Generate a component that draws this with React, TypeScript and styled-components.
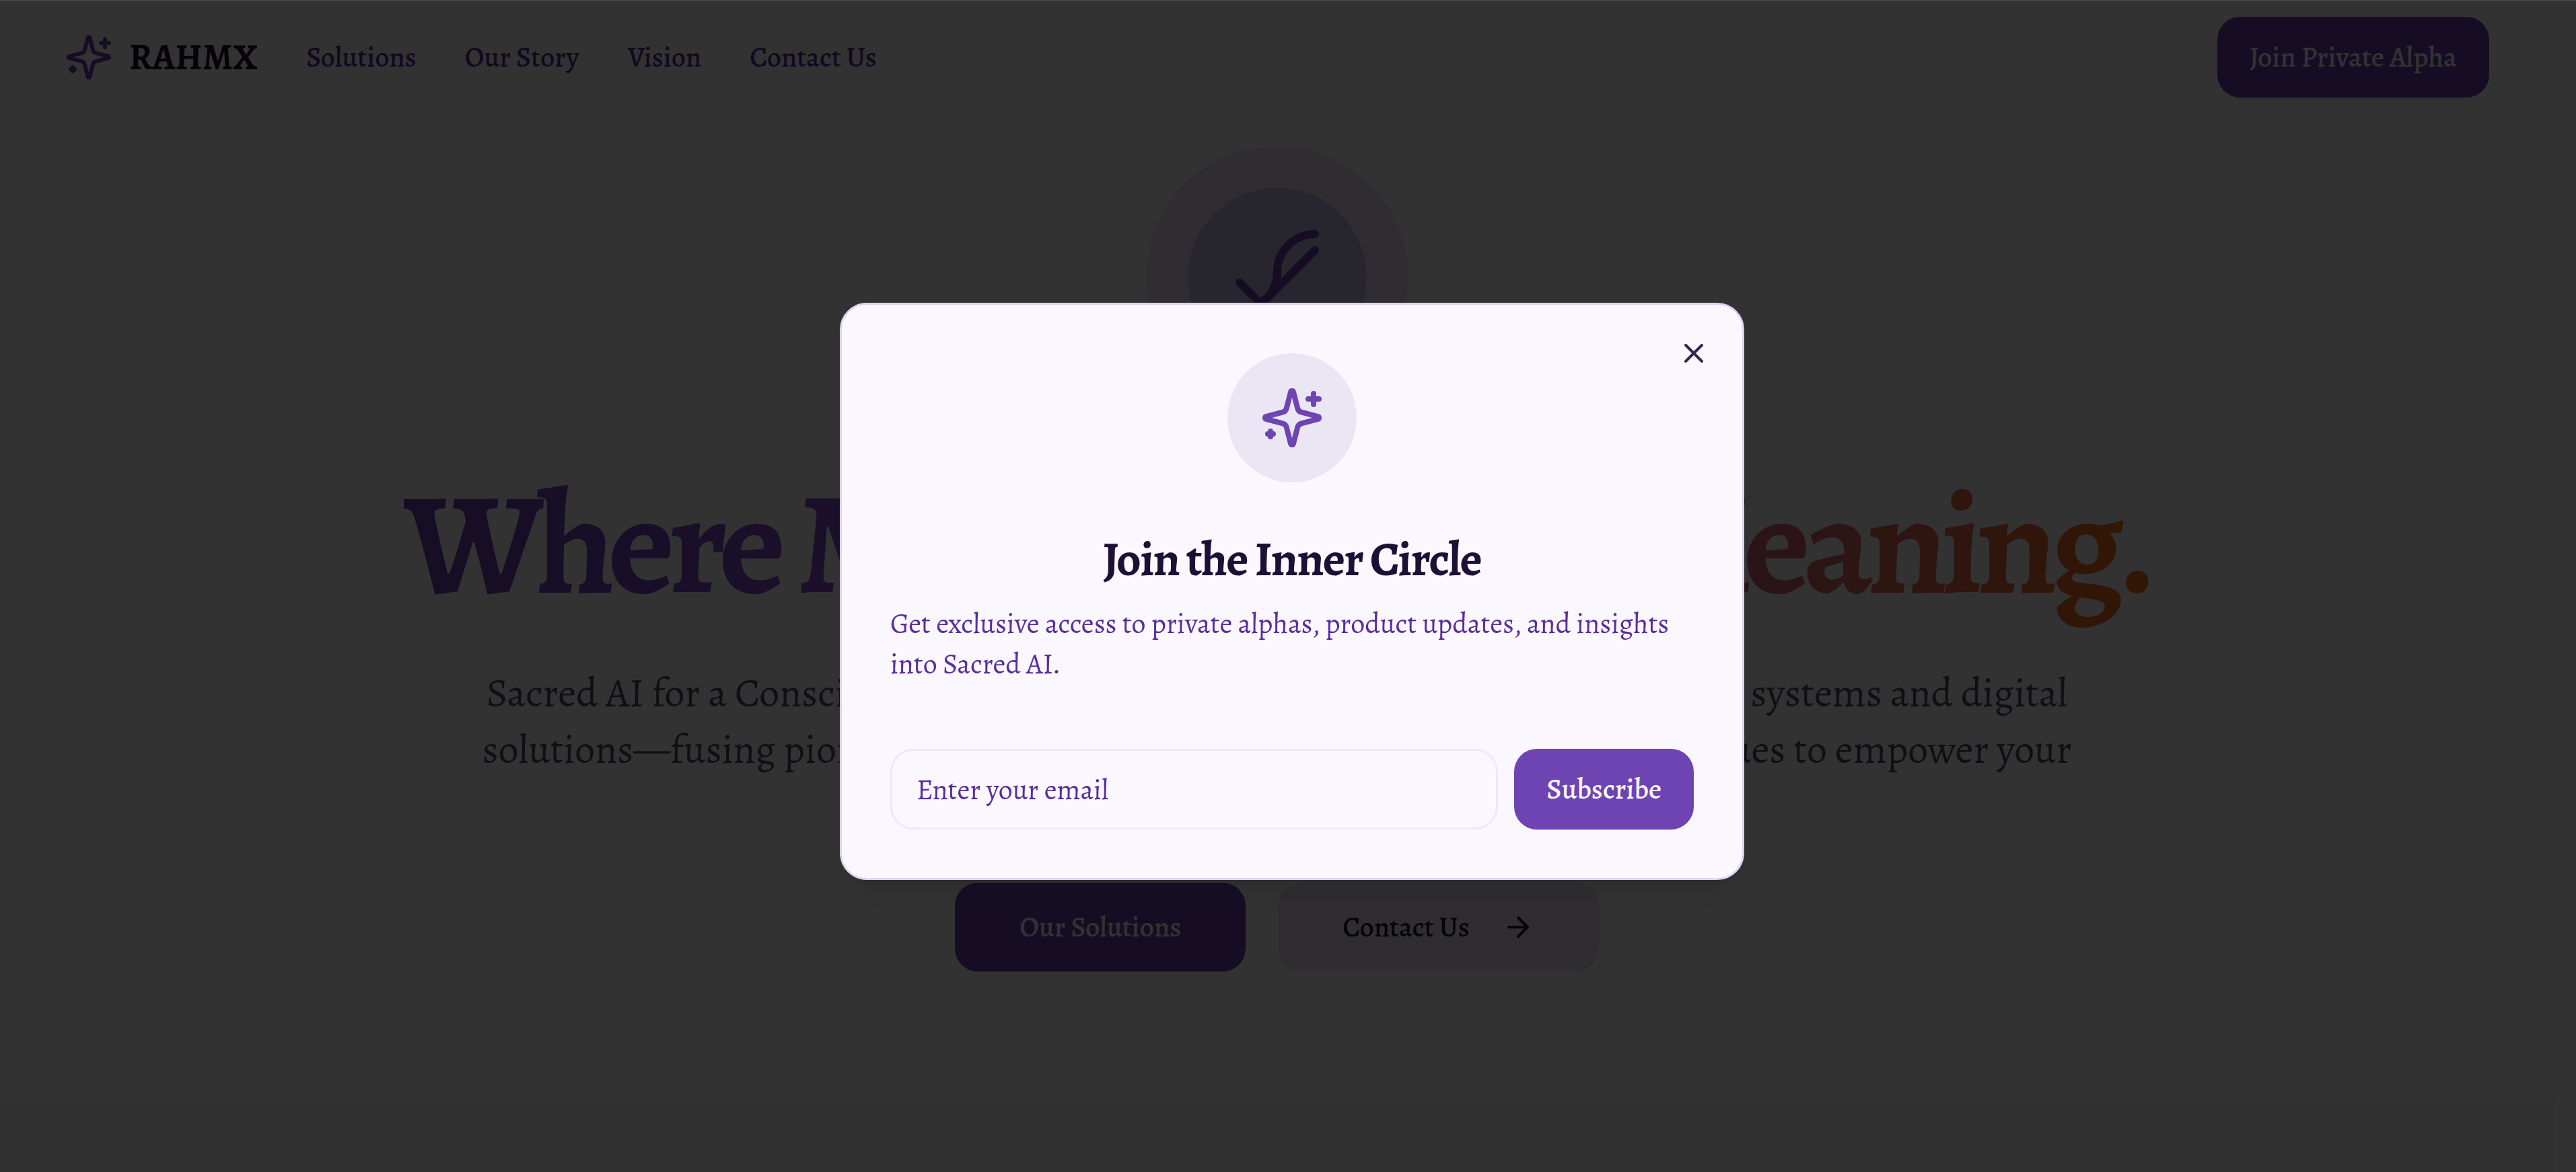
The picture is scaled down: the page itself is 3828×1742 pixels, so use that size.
import React from "react";
import styled, { createGlobalStyle } from "styled-components";
import { ArrowRight, X } from "lucide-react";

const color = {
  canvas: "#fbf9fc",
  surface: "#faf8fe",
  primary: "#6e44b2",
  ink: "#1e1035",
  link: "#5a2d9c",
  body: "#524a66",
  line: "#eae8ec",
  band: "#f3f1f3",
  tint: "rgba(110, 68, 178, 0.13)",
  tintStrong: "rgba(70, 50, 165, 0.24)",
};

const radius = { control: "34px", panel: "40px" };

const GlobalStyle = createGlobalStyle`
  *, *::before, *::after { box-sizing: border-box; }
  html { background: ${color.canvas}; }
  body {
    margin: 0;
    overflow: hidden;
    background: ${color.canvas};
    color: ${color.ink};
    font-family: Alegreya, "Liberation Serif", serif;
    font-size: 42px;
    line-height: 60px;
  }
  button, input { font: inherit; }
`;

const Page = styled.div`
  min-height: 100vh;
  padding: 1px 33px 0 0;
  display: flex;
  flex-direction: column;
`;

const Header = styled.header`
  display: flex;
  align-items: center;
  justify-content: space-between;
  padding: 24px 96px;
  border-bottom: 3px solid ${color.line};
`;

const HeaderStart = styled.div`
  display: flex;
  align-items: center;
  gap: 72px;
`;

const Brand = styled.a`
  display: flex;
  align-items: center;
  gap: 24px;
  color: ${color.ink};
  font-size: 54px;
  font-weight: 700;
  text-decoration: none;

  svg { color: ${color.primary}; }
`;

const Nav = styled.nav`
  display: flex;
  gap: 72px;
`;

const NavLink = styled.a`
  color: ${color.link};
  font-weight: 500;
  text-decoration: none;
`;

const Button = styled.button<{ $large?: boolean; $soft?: boolean }>`
  display: inline-flex;
  align-items: center;
  justify-content: center;
  gap: 48px;
  height: ${(p) => (p.$large ? 132 : 120)}px;
  padding: 0 ${(p) => (p.$large ? 96 : 48)}px;
  border: 0;
  border-radius: ${radius.control};
  background: ${(p) => (p.$soft ? color.tint : color.primary)};
  color: ${(p) => (p.$soft ? color.ink : color.surface)};
  font-weight: 500;
  white-space: nowrap;
  cursor: pointer;
`;

const Hero = styled.section`
  display: flex;
  flex-direction: column;
  align-items: center;
  padding: 45px 96px 192px;
  text-align: center;
`;

const Halo = styled.div`
  display: grid;
  place-items: center;
  width: 390px;
  height: 390px;
  margin-bottom: 93px;
  border-radius: 50%;
  background: ${color.tint};
`;

const HaloCore = styled.div`
  display: grid;
  place-items: center;
  width: 266px;
  height: 266px;
  border-radius: 50%;
  background: ${color.tintStrong};
  color: ${color.primary};
`;

const Headline = styled.h1`
  margin: 0 0 48px;
  padding-bottom: 24px;
  background: linear-gradient(to right, ${color.primary}, #a855f7, #f97316);
  background-clip: text;
  -webkit-background-clip: text;
  color: transparent;
  font-size: 216px;
  line-height: 216px;
  font-weight: 700;
  letter-spacing: -0.05em;
  white-space: nowrap;
`;

const Lead = styled.p`
  margin: 0 0 72px;
  color: ${color.body};
  font-size: 60px;
  line-height: 84px;
`;

const Actions = styled.div`
  display: flex;
  gap: 48px;
`;

const Band = styled.section`
  flex: 1;
  background: ${color.band};
`;

const Overlay = styled.div`
  position: fixed;
  inset: 0;
  display: grid;
  place-items: center;
  padding: 15px 0 0 12px;
  border-top: 1px solid #434e51;
  background: rgba(0, 0, 0, 0.8);
`;

const Dialog = styled.div`
  position: relative;
  display: flex;
  flex-direction: column;
  align-items: center;
  width: 100%;
  max-width: 1344px;
  padding: 72px;
  border: 3px solid #ded3f0;
  border-radius: ${radius.panel};
  background: ${color.surface};
  box-shadow: 0 30px 45px -9px rgba(0, 0, 0, 0.1), 0 12px 18px -12px rgba(0, 0, 0, 0.1);
`;

const CloseButton = styled.button`
  position: absolute;
  top: 48px;
  right: 48px;
  display: flex;
  padding: 0;
  border: 0;
  background: none;
  color: #35234f;
  cursor: pointer;
`;

const Badge = styled.div`
  display: grid;
  place-items: center;
  width: 192px;
  height: 192px;
  margin-bottom: 72px;
  border-radius: 50%;
  background: #ebe6f4;
  color: ${color.primary};
`;

const DialogTitle = styled.h2`
  margin: 0 0 24px;
  font-size: 72px;
  line-height: 84px;
  font-weight: 700;
  letter-spacing: -0.025em;
`;

const DialogText = styled.p`
  align-self: stretch;
  margin: 0 0 96px;
  color: ${color.link};
`;

const Form = styled.form`
  align-self: stretch;
  display: flex;
  gap: 24px;
`;

const EmailInput = styled.input`
  flex: 1;
  min-width: 0;
  height: 120px;
  padding: 0 36px;
  border: 3px solid #edeaf6;
  border-radius: ${radius.control};
  background: ${color.surface};
  color: ${color.ink};
  outline: none;

  &::placeholder {
    color: ${color.link};
    opacity: 1;
  }
`;

function Sparkles({ size }: { size: number }) {
  return (
    <svg
      width={size}
      height={size}
      viewBox="0 0 24 24"
      fill="none"
      stroke="currentColor"
      strokeWidth={2}
      strokeLinecap="round"
      strokeLinejoin="round"
      aria-hidden="true"
    >
      <path d="M9.937 15.5A2 2 0 0 0 8.5 14.063l-6.135-1.582a.5.5 0 0 1 0-.962L8.5 9.936A2 2 0 0 0 9.937 8.5l1.582-6.135a.5.5 0 0 1 .963 0L14.063 8.5A2 2 0 0 0 15.5 9.937l6.135 1.581a.5.5 0 0 1 0 .964L15.5 14.063a2 2 0 0 0-1.437 1.437l-1.582 6.135a.5.5 0 0 1-.963 0z" />
      <path d="M20 3v4M22 5h-4M4 17v2M5 18H3" />
    </svg>
  );
}

function HeroMark() {
  return (
    <svg
      width={144}
      height={144}
      viewBox="0 0 144 144"
      fill="none"
      stroke="currentColor"
      strokeWidth={12}
      strokeLinecap="round"
      strokeLinejoin="round"
      aria-hidden="true"
    >
      <path d="M128 8A56 56 0 0 0 72 64A56 56 0 0 1 16 120" />
      <path d="M16 80l32 32 80-80" />
    </svg>
  );
}

const links = ["Solutions", "Our Story", "Vision", "Contact Us"];

export default function App() {
  return (
    <>
      <GlobalStyle />
      <Page>
        <Header>
          <HeaderStart>
            <Brand href="#">
              <Sparkles size={72} />
              RAHMX
            </Brand>
            <Nav>
              {links.map((label) => (
                <NavLink key={label} href="#">
                  {label}
                </NavLink>
              ))}
            </Nav>
          </HeaderStart>
          <Button type="button">Join Private Alpha</Button>
        </Header>
        <main>
          <Hero>
            <Halo>
              <HaloCore>
                <HeroMark />
              </HaloCore>
            </Halo>
            <Headline>Where Machine Meets Meaning.</Headline>
            <Lead>
              Sacred AI for a Conscious World. We craft intelligent, soul-aligned operating systems and digital
              <br />
              solutions—fusing pioneering research with timeless wisdom and human values to empower your
              <br />
              purpose and your community.
            </Lead>
            <Actions>
              <Button type="button" $large>
                Our Solutions
              </Button>
              <Button type="button" $large $soft>
                Contact Us
                <ArrowRight size={48} aria-hidden="true" />
              </Button>
            </Actions>
          </Hero>
        </main>
        <Band />
      </Page>
      <Overlay>
        <Dialog role="dialog" aria-modal="true" aria-labelledby="join-title" aria-describedby="join-text">
          <Badge>
            <Sparkles size={96} />
          </Badge>
          <DialogTitle id="join-title">Join the Inner Circle</DialogTitle>
          <DialogText id="join-text">
            Get exclusive access to private alphas, product updates, and insights into Sacred AI.
          </DialogText>
          <Form onSubmit={(event) => event.preventDefault()}>
            <EmailInput type="email" placeholder="Enter your email" aria-label="Enter your email" />
            <Button type="submit">Subscribe</Button>
          </Form>
          <CloseButton type="button" aria-label="Close">
            <X size={48} />
          </CloseButton>
        </Dialog>
      </Overlay>
    </>
  );
}
